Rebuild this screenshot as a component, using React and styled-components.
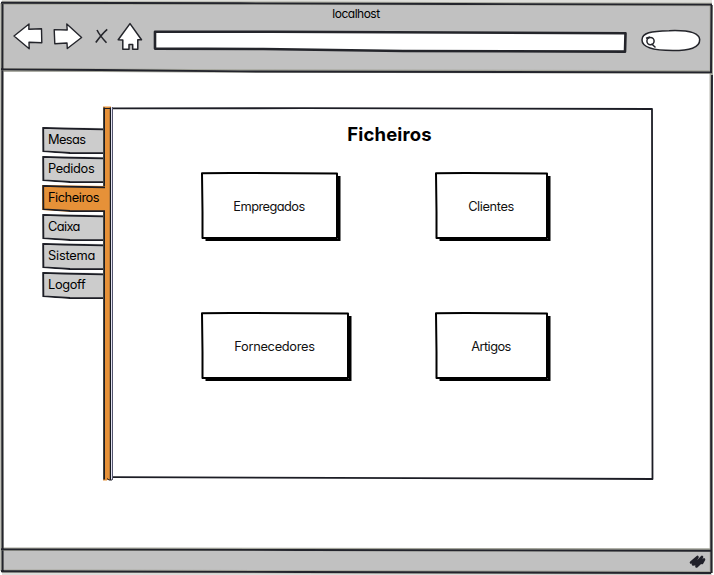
import React from "react";
import styled, { createGlobalStyle } from "styled-components";

const Global = createGlobalStyle`
  *, *::before, *::after { box-sizing: border-box; }
  body { margin: 0; background: #fff; overflow: hidden; }
`;

const Window = styled.div`
  position: relative;
  display: flex;
  flex-direction: column;
  width: 714px;
  height: 575px;
  background: #fff;
  color: #000;
  font-family: Inter, "Liberation Sans", sans-serif;
  font-feature-settings: "cv11";
  font-size: 12.8px;
`;

/* Hand-drawn pen strokes laid over the box they outline */
const Ink = styled.svg`
  position: absolute;
  inset: 0;
  width: 100%;
  height: 100%;
  overflow: visible;
  fill: none;
  stroke: ${(p) => p.$color || "#1c1d25"};
  stroke-width: ${(p) => p.$width || 2};
  stroke-linejoin: round;
  pointer-events: none;
`;

const FrameLine = styled.path`
  stroke: #23242c;
  stroke-width: 1.9;
`;

const Header = styled.header`
  display: flex;
  flex-direction: column;
  height: 72px;
  margin: 0 2px;
  padding-top: 6px;
  background: linear-gradient(#dededa 0 3px, #c1c1c1 3px);
`;

const Address = styled.div`
  width: 708px;
  height: 16px;
  line-height: 16px;
  font-size: 12px;
  letter-spacing: -0.5px;
  text-align: center;
`;

const Toolbar = styled.nav`
  display: flex;
  align-items: flex-start;
  padding-left: 11px;
`;

const ToolIcon = styled.svg`
  flex: none;
  width: ${(p) => p.$w}px;
  height: 30px;
  margin-right: ${(p) => p.$gap || 0}px;
  overflow: visible;
  fill: #fff;
  stroke: #24252b;
  stroke-width: ${(p) => p.$stroke || 1.4};
  stroke-linejoin: round;
`;

const Main = styled.main`
  display: flex;
  height: 477px;
  padding: 35px 0 0 42px;
`;

const Tabs = styled.div`
  display: flex;
  flex-direction: column;
  gap: 2px;
  width: 61px;
  padding-top: 20px;
`;

const Tab = styled.div`
  position: relative;
  width: ${(p) => (p.$active ? 65 : 61)}px;
  height: 27px;
  padding-left: 6px;
  line-height: 25px;
  letter-spacing: ${(p) => p.$track || 0}px;
  white-space: nowrap;
  background: ${(p) => (p.$active ? "#e69138" : "#ccc")};
  clip-path: polygon(0 0, 101% 1px, 101% 100%, 45% 100%, 0 25px);
  z-index: ${(p) => (p.$active ? 2 : 0)};
`;

const Rail = styled.div`
  position: relative;
  width: 10px;
  height: 373px;
  background: linear-gradient(90deg, #44453f 0 1px, #1c1d25 1px 2px, #e69138 2px 6px, #b97a38 6px 7px, #17191f 7px 8px, #e4e4f4 8px 9px, #55566e 9px);
`;

const Panel = styled.section`
  position: relative;
  width: 540px;
  height: 372px;
  padding: 15px 0 0 88px;
`;

const Heading = styled.h1`
  width: 377px;
  height: 24px;
  margin: 0 0 26px;
  font-size: 18.5px;
  line-height: 24px;
  font-weight: 700;
  letter-spacing: 0.15px;
  text-align: center;
`;

const Cards = styled.div`
  display: grid;
  grid-template-columns: 234px 116px;
  grid-auto-rows: 140px;
`;

const Card = styled.button`
  position: relative;
  width: ${(p) => p.$w}px;
  height: 67px;
  padding: 2px 1px 0 0;
  border: 0;
  background: #fff;
  box-shadow: 3.5px 3px 0 -1px #000;
  color: #111;
  font: inherit;
  font-feature-settings: inherit;
  letter-spacing: ${(p) => p.$track || 0}px;
`;

const Footer = styled.footer`
  display: flex;
  justify-content: flex-end;
  height: 26px;
  margin: 0 2px;
  padding: 4px 6px 0 0;
  background: linear-gradient(#c1c1c1 24px, #dcdcd9 24px);
`;

const Grip = styled.svg`
  width: 17px;
  height: 17px;
  fill: none;
  stroke: #202029;
  stroke-width: 2.6;
  stroke-linecap: round;
  stroke-linejoin: round;
`;

const tabs = [
  ["Mesas", -0.6],
  ["Pedidos", -0.35],
  ["Ficheiros", -0.45],
  ["Caixa", -0.6],
  ["Sistema", -0.2],
  ["Logoff", -0.35],
];

const cards = [
  ["Empregados", 137, -0.55],
  ["Clientes", 113, -0.4],
  ["Fornecedores", 148, -0.3],
  ["Artigos", 113, -0.55],
];

export default function App() {
  return (
    <>
      <Global />
      <Window>
        <Header>
          <Address>localhost</Address>
          <Toolbar>
            <ToolIcon $w={29} $gap={11} viewBox="0 0 29 30">
              <path d="M1 14 16 2 15.8 7.3 28.5 6.8 28.8 20.8 16 20.3 16.2 26.8Z" />
            </ToolIcon>
            <ToolIcon $w={29} $gap={13} viewBox="0 0 29 30">
              <path d="M1.2 7.6 14.2 8 13.8 2 28.6 15.5 14.3 26.5 14 21 1.8 21.8Z" />
            </ToolIcon>
            <ToolIcon $w={13} $gap={9} $stroke={1.6} viewBox="0 0 13 30">
              <path d="M2 8C4 12 8 17 11.5 20.8M12.2 7.3C8 11 4 16 .8 20.5" />
            </ToolIcon>
            <ToolIcon $w={25} $gap={11} $stroke={1.5} viewBox="0 0 25 30">
              <path d="M13 1.6 24.5 17.8H20.8V27.3H15.7V22.4H12V27.3H5.8V18L1.2 17.7Z" />
            </ToolIcon>
            <ToolIcon $w={475} $gap={12} $stroke={2.6} viewBox="0 0 475 30">
              <path d="M2 9.8 120 9.8 472.5 11.2 472 29.6 250 29 110 27 2 26.6Z" />
            </ToolIcon>
            <ToolIcon $w={60} $stroke={1.5} viewBox="0 0 60 30">
              <path d="M2 18C2 11 11 9 29 8.7 47 8 59 10 59.7 17.5 60 26 49 28.5 33 28.5 11 28.5 2 25 2 18Z" />
              <circle cx="10.5" cy="19.1" r="3.6" />
              <path d="m6 16.3 4-1.3M11.5 21.8l4 3.7" />
            </ToolIcon>
          </Toolbar>
        </Header>
        <Main>
          <Tabs>
            {tabs.map(([label, track]) => (
              <Tab key={label} $active={label === "Ficheiros"} $track={track}>
                {label}
                <Ink $width={1.8}>
                  <path
                    d={`M${label === "Ficheiros" ? 63 : 61} 2.3 22 1.5 1.2 .8 1.4 24.4 28 26 ${
                      label === "Ficheiros" ? 63 : 61
                    } 26.2`}
                  />
                </Ink>
              </Tab>
            ))}
          </Tabs>
          <Rail>
            <Ink $width={1}>
              <path stroke="#e69138" d="M0 0H8M0 373H4" />
              <path d="M1 1.5H8M4 371.5 6 373H9" />
            </Ink>
          </Rail>
          <Panel>
            <Ink $width={1.8}>
              <path d="M0 1.4 190 1.2 539 2 539.5 372 380 371.3 0 370.2" />
            </Ink>
            <Heading>Ficheiros</Heading>
            <Cards>
              {cards.map(([label, w, track]) => (
                <Card key={label} $w={w} $track={track}>
                  {label}
                  <Ink $width={2} $color="#000">
                    <path d={`M1 1.3 30 1 ${w - 1} 1.5 ${w - 1} 66 40 66 1.5 66 1.5 40Z`} />
                  </Ink>
                </Card>
              ))}
            </Cards>
          </Panel>
        </Main>
        <Footer>
          <Grip viewBox="0 0 17 17">
            <path d="M2 9.5 8.5 4 4 11.5 6.5 11 13 4 7.5 13.5 15 6.5 13 10" />
          </Grip>
        </Footer>
        <Ink $width={3.4} $color="#a5a69c">
          <path d="M2 3 300 3.2 712 4.5M2 69.8 240 71 712 72M2 549 450 549.7 711 550M2 571 711 572.8M2 3V571M711.3 5V573" />
          <FrameLine d="M1 2.8 240 3.3 460 4 712 4.6M1 69.4 100 70 240 71.4 712 72.4M1 549.4 300 550 711 550.8M1 571.2 300 572 711 573M2.5 3 2 280 2.6 571M711.5 5 711 72M712 75 711 300 711.4 573" />
        </Ink>
      </Window>
    </>
  );
}
